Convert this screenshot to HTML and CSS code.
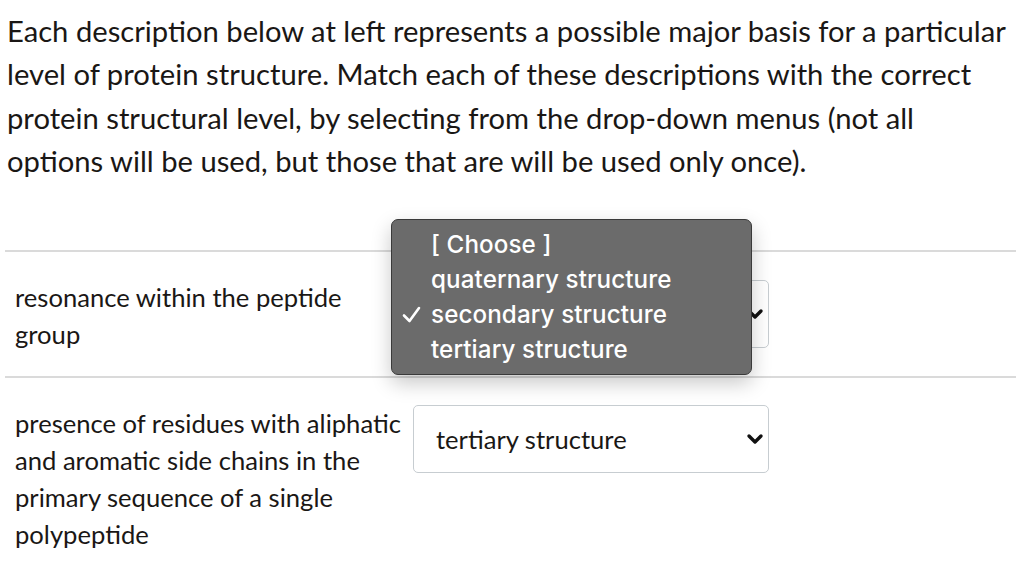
FILE: index.html
```html
<!DOCTYPE html>
<html lang="en">
<head>
    <meta charset="UTF-8">
    <title>Matching Question</title>
    <link rel="stylesheet" href="styles.css">
</head>
<body>
    <p class="intro">Each description below at left represents a possible major basis for a particular level of protein structure. Match each of these descriptions with the correct protein structural level, by selecting from the drop-down menus (not all options will be used, but those that are will be used only once).</p>

    <!-- Matching rows -->
    <div class="answers">
        <div class="answer-row">
            <div class="answer-label">resonance within the peptide group</div>
            <div class="answer-select">
                <div class="select-box">
                    <span class="select-value"></span>
                    <svg class="chevron" width="18" height="12" viewBox="0 0 18 12"><path d="M3 3 L9 9 L15 3" fill="none" stroke="#111" stroke-width="3.4" stroke-linecap="round" stroke-linejoin="round"/></svg>
                </div>
                <!-- Open drop-down menu -->
                <ul class="dropdown">
                    <li>[ Choose ]</li>
                    <li>quaternary structure</li>
                    <li class="checked">
                        <svg class="tick" width="19" height="17" viewBox="0 0 19 17"><path d="M2 9.5 L7.5 15 L17 2" fill="none" stroke="#fff" stroke-width="2.6" stroke-linecap="round" stroke-linejoin="round"/></svg>
                        secondary structure
                    </li>
                    <li>tertiary structure</li>
                </ul>
            </div>
        </div>
        <div class="answer-row">
            <div class="answer-label">presence of residues with aliphatic and aromatic side chains in the primary sequence of a single polypeptide</div>
            <div class="answer-select">
                <div class="select-box">
                    <span class="select-value">tertiary structure</span>
                    <svg class="chevron" width="18" height="12" viewBox="0 0 18 12"><path d="M3 3 L9 9 L15 3" fill="none" stroke="#111" stroke-width="3.4" stroke-linecap="round" stroke-linejoin="round"/></svg>
                </div>
            </div>
        </div>
    </div>
</body>
</html>
```

FILE: styles.css
```css
body {
    margin: 0;
    background: #fff;
    color: #1a1715;
    font-family: Lato, "Liberation Sans", sans-serif;
}

.intro {
    margin: 9px 0 0 7px;
    width: 1004px;
    font-size: 29.2px;
    line-height: 43.4px;
}

.answers {
    margin: 67px 0 0 5px;
    width: 1011px;
}

.answer-row {
    display: grid;
    grid-template-columns: 408px 356px;
    border-top: 2px solid #dadada;
    padding: 27px 0 23px;
}

.answer-label {
    padding-left: 10px;
    font-size: 25.6px;
    line-height: 37px;
}

.answer-select {
    position: relative;
    align-self: start;
}

.answer-row:first-child .answer-select {
    margin-top: 1px;
}

.select-box {
    height: 68px;
    box-sizing: border-box;
    border: 1px solid #c7cdd1;
    border-radius: 5px;
    display: flex;
    align-items: center;
    justify-content: space-between;
    padding: 0 4px 0 22px;
    font-size: 25.6px;
}

.dropdown {
    position: absolute;
    left: -22px;
    top: -61px;
    width: 361px;
    height: 156px;
    box-sizing: border-box;
    margin: 0;
    padding: 7px 0 0 39px;
    list-style: none;
    background: #6b6b6b;
    border: 1px solid #3a3a3a;
    border-radius: 7px;
    box-shadow: 0 8px 20px rgba(0, 0, 0, 0.22);
    color: #fff;
    font-family: Inter, "Open Sans", sans-serif;
    font-weight: 500;
    font-size: 24.2px;
    line-height: 35px;
    letter-spacing: 0.1px;
}

.dropdown li {
    position: relative;
}

.tick {
    position: absolute;
    left: -29px;
    top: 9px;
}
```
